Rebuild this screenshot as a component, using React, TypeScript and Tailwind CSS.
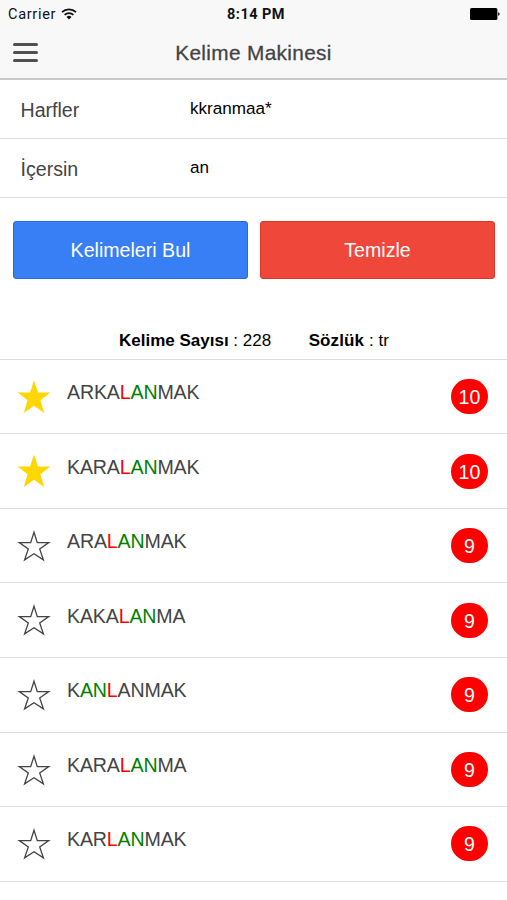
import React, { useState } from 'react';

type Part = { text: string; tone?: 'joker' | 'match' };

interface Word {
  parts: Part[];
  score: number;
  starred?: boolean;
}

const WORDS: Word[] = [
  { parts: [{ text: 'ARKA' }, { text: 'L', tone: 'joker' }, { text: 'AN', tone: 'match' }, { text: 'MAK' }], score: 10, starred: true },
  { parts: [{ text: 'KARA' }, { text: 'L', tone: 'joker' }, { text: 'AN', tone: 'match' }, { text: 'MAK' }], score: 10, starred: true },
  { parts: [{ text: 'ARA' }, { text: 'L', tone: 'joker' }, { text: 'AN', tone: 'match' }, { text: 'MAK' }], score: 9 },
  { parts: [{ text: 'KAKA' }, { text: 'L', tone: 'joker' }, { text: 'AN', tone: 'match' }, { text: 'MA' }], score: 9 },
  { parts: [{ text: 'K' }, { text: 'AN', tone: 'match' }, { text: 'L', tone: 'joker' }, { text: 'ANMAK' }], score: 9 },
  { parts: [{ text: 'KARA' }, { text: 'L', tone: 'joker' }, { text: 'AN', tone: 'match' }, { text: 'MA' }], score: 9 },
  { parts: [{ text: 'KAR' }, { text: 'L', tone: 'joker' }, { text: 'AN', tone: 'match' }, { text: 'MAK' }], score: 9 },
];

const TONES = {
  joker: 'text-[#ff0000]',
  match: 'text-[#008000]',
};

function WifiIcon() {
  return (
    <svg width="16" height="12" viewBox="0 0 16 12" fill="none" stroke="#111" strokeWidth="1.8" className="-mt-[2px]">
      <path d="M1 4.2a10.2 10.2 0 0 1 14 0" />
      <path d="M3.6 6.9a6.4 6.4 0 0 1 8.8 0" />
      <path d="M8 11.6 5.5 9a3.6 3.6 0 0 1 5 0z" fill="#111" stroke="none" />
    </svg>
  );
}

function BatteryIcon() {
  return (
    <svg width="30" height="12" viewBox="0 0 30 12" className="-mt-[2px]">
      <rect x="0" y="0" width="27.4" height="12" rx="1.6" fill="#000" />
      <path d="M28.2 4.2c1.9.4 1.9 3.2 0 3.6z" fill="#000" />
    </svg>
  );
}

function StarIcon({ filled }: { filled?: boolean }) {
  if (filled) {
    return (
      <svg width="34" height="34" viewBox="0 0 34 34" fill="#ffd700">
        <path d="M17 .6l4 11.9h12.4l-10 7.8L27.2 33 17 25.8 6.8 33l3.8-12.7-10-7.8H13z" />
      </svg>
    );
  }
  return (
    <svg width="34" height="34" viewBox="0 0 34 34" fill="none" stroke="#444" strokeWidth="1.3">
      <path d="M17 3.2l3.3 10.4h11.4l-9 6.3 3.7 11L17 24.7l-9.4 6.2 3.7-11-9-6.3h11.4z" />
    </svg>
  );
}

export default function App() {
  const [letters, setLetters] = useState('kkranmaa*');
  const [contains, setContains] = useState('an');

  const handleClear = () => {
    setLetters('');
    setContains('');
  };

  return (
    <div className="w-[507px] h-[900px] overflow-hidden bg-white font-['Liberation_Sans',Arial,sans-serif] text-[#444]">
      {/* Header */}
      <header className="h-[80px] bg-[#f8f8f8] border-b-2 border-[#c9c9c9]">
        <div className="grid grid-cols-3 items-center h-[27px] pt-[2px] pl-[8px] pr-[7px] text-[14.5px] text-[#111] font-[Roboto,sans-serif]">
          <div className="flex items-center gap-[5px]">
            <span className="tracking-[0.7px]">Carrier</span>
            <WifiIcon />
          </div>
          <span className="pl-[4px] text-center font-bold tracking-[0.45px]">8:14 PM</span>
          <div className="flex justify-end">
            <BatteryIcon />
          </div>
        </div>
        <div className="grid grid-cols-[1fr_auto_1fr] items-center h-[51px] px-[13px]">
          <button className="w-[25px] flex flex-col gap-[5px]">
            <span className="h-[3px] rounded-full bg-[#505050]" />
            <span className="h-[3px] rounded-full bg-[#505050]" />
            <span className="h-[3px] rounded-full bg-[#505050]" />
          </button>
          <h1 className="text-[20.8px] tracking-[0.35px] [-webkit-text-stroke:0.3px_#444]">Kelime Makinesi</h1>
        </div>
      </header>

      {/* Search form */}
      <label className="flex items-center h-[59px] pl-[20.5px] border-b border-[#dcdcdc]">
        <span className="w-[169.5px] pt-[4px] text-[19.6px]">Harfler</span>
        <input
          value={letters}
          onChange={(e) => setLetters(e.target.value)}
          className="w-[280px] text-[17.1px] text-black outline-none"
        />
      </label>
      <label className="flex items-center h-[59px] pl-[20.5px] border-b border-[#dcdcdc]">
        <span className="w-[169.5px] pt-[4px] text-[19.6px]">İçersin</span>
        <input
          value={contains}
          onChange={(e) => setContains(e.target.value)}
          className="w-[280px] text-[17.1px] text-black outline-none"
        />
      </label>

      {/* Actions */}
      <div className="grid grid-cols-2 gap-[12px] pt-[22.5px] px-[12.5px] text-[19.6px] text-white">
        <button className="h-[58px] pt-[2px] pl-[1px] rounded-[3px] border border-[#256be5] bg-[#387ef5]">Kelimeleri Bul</button>
        <button
          onClick={handleClear}
          className="h-[58px] pt-[2px] pl-[1px] rounded-[3px] border border-[#df3628] bg-[#ef473a]"
        >
          Temizle
        </button>
      </div>

      {/* Summary */}
      <div className="flex items-end h-[81.3px] pl-[119px] pb-[8px] gap-[37.5px] border-b border-[#dedede] text-[17px] leading-[20px] text-black">
        <span><b>Kelime Sayısı</b> : 228</span>
        <span className="tracking-[0.1px]"><b>Sözlük</b> : tr</span>
      </div>

      {/* Results */}
      <ul>
        {WORDS.map((word, i) => (
          <li key={i} className="flex items-start h-[74.55px] pl-[17px] pr-[19px] border-b border-[#dedede]">
            <span className="mt-[20px]">
              <StarIcon filled={word.starred} />
            </span>
            <span className="mt-[20.2px] ml-[16px] flex-1 text-[19.6px] leading-[24px] tracking-[-0.15px]">
              {word.parts.map((part, j) => (
                <span key={j} className={part.tone && TONES[part.tone]}>{part.text}</span>
              ))}
            </span>
            <span className="mt-[19.4px] pt-[2px] w-[37px] h-[35px] flex items-center justify-center rounded-full bg-[#ff0000] text-white text-[19.6px]">
              {word.score}
            </span>
          </li>
        ))}
      </ul>
    </div>
  );
}
